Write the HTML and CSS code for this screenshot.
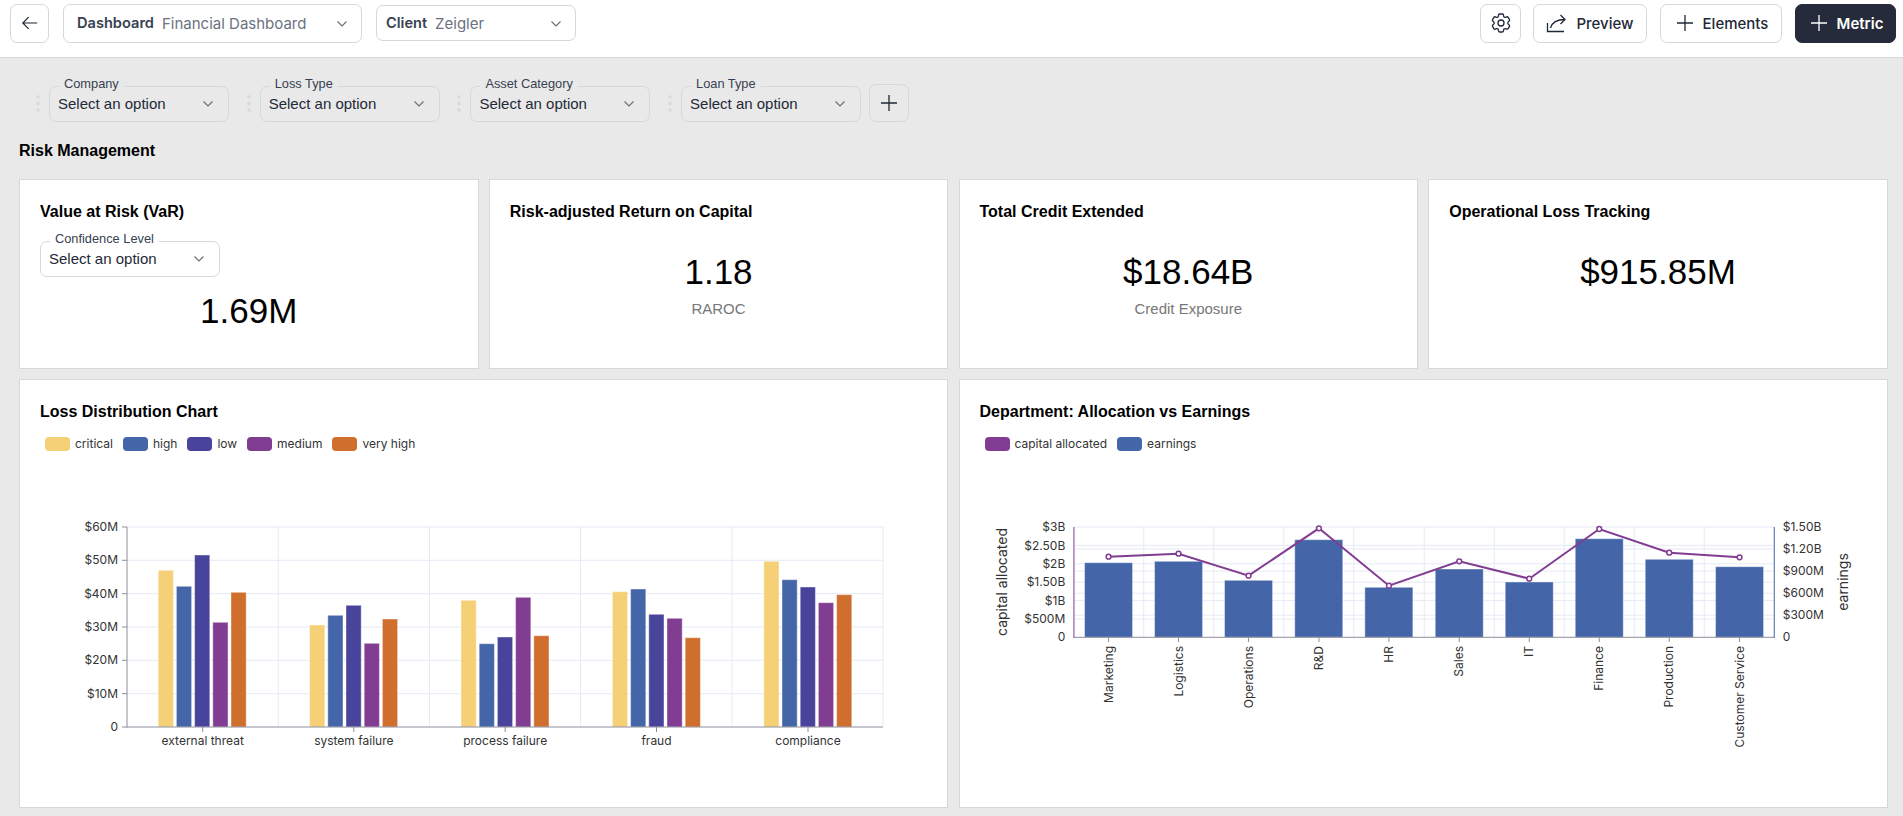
FILE: index.html
```html
<!DOCTYPE html>
<html lang="en">
<head>
<meta charset="utf-8">
<title>Financial Dashboard</title>
<link rel="stylesheet" href="styles.css">
</head>
<body>
<header class="topbar">
  <button class="btn back" aria-label="Back"><svg class="ic18" viewBox="0 0 20 20"><path d="M18 10H2M8.5 3.5 2 10l6.5 6.5"/></svg></button>
  <div class="btn pick pick-dash"><b>Dashboard</b><span>Financial Dashboard</span><svg class="chev" viewBox="0 0 10 6"><path d="M.5.5 5 5 9.5.5"/></svg></div>
  <div class="btn pick pick-client"><b>Client</b><span>Zeigler</span><svg class="chev" viewBox="0 0 10 6"><path d="M.5.5 5 5 9.5.5"/></svg></div>
  <div class="actions">
    <button class="btn gear" aria-label="Settings"><svg class="ic24" viewBox="0 0 24 24"><path d="M9.594 3.94c.09-.542.56-.94 1.11-.94h2.593c.55 0 1.02.398 1.11.94l.213 1.281c.063.374.313.686.645.87.074.04.147.083.22.127.325.196.72.257 1.075.124l1.217-.456a1.125 1.125 0 0 1 1.37.49l1.296 2.247a1.125 1.125 0 0 1-.26 1.431l-1.003.827c-.293.241-.438.613-.43.992a7.723 7.723 0 0 1 0 .255c-.008.378.137.75.43.991l1.004.827c.424.35.534.955.26 1.43l-1.298 2.247a1.125 1.125 0 0 1-1.369.491l-1.217-.456c-.355-.133-.75-.072-1.076.124a6.47 6.47 0 0 1-.22.128c-.331.183-.581.495-.644.869l-.213 1.281c-.09.543-.56.94-1.11.94h-2.594c-.55 0-1.019-.398-1.11-.94l-.213-1.281c-.062-.374-.312-.686-.644-.87a6.52 6.52 0 0 1-.22-.127c-.325-.196-.72-.257-1.076-.124l-1.217.456a1.125 1.125 0 0 1-1.369-.49l-1.297-2.247a1.125 1.125 0 0 1 .26-1.431l1.004-.827c.292-.24.437-.613.43-.991a6.932 6.932 0 0 1 0-.255c.007-.38-.138-.751-.43-.992l-1.004-.827a1.125 1.125 0 0 1-.26-1.43l1.297-2.247a1.125 1.125 0 0 1 1.37-.491l1.216.456c.356.133.751.072 1.076-.124.072-.044.146-.086.22-.128.332-.183.582-.495.644-.869l.214-1.28Z"/><path d="M15 12a3 3 0 1 1-6 0 3 3 0 0 1 6 0Z"/></svg></button>
    <button class="btn act act-preview"><svg class="ic20" viewBox="0 0 20 20"><path d="M1.500 10v8.500H18"/><path d="M4.500 15C6 9.500 10 6.500 19 6.500M14.500 2 19 6.500 14.500 11"/></svg>Preview</button>
    <button class="btn act act-elements"><svg class="ic16" viewBox="0 0 16 16"><path d="M8 0v16M0 8h16"/></svg>Elements</button>
    <button class="btn act act-metric"><svg class="ic16" viewBox="0 0 16 16"><path d="M8 0v16M0 8h16"/></svg>Metric</button>
  </div>
</header>

<section class="filters">
  <div class="filter"><svg class="handle" viewBox="0 0 6 18"><circle cx="3" cy="2" r="1.800"/><circle cx="3" cy="8.500" r="1.800"/><circle cx="3" cy="15" r="1.800"/></svg>
    <div class="select"><label>Company</label><span>Select an option</span><svg class="chev" viewBox="0 0 10 6"><path d="M.5.5 5 5 9.5.5"/></svg></div></div>
  <div class="filter"><svg class="handle" viewBox="0 0 6 18"><circle cx="3" cy="2" r="1.800"/><circle cx="3" cy="8.500" r="1.800"/><circle cx="3" cy="15" r="1.800"/></svg>
    <div class="select"><label>Loss Type</label><span>Select an option</span><svg class="chev" viewBox="0 0 10 6"><path d="M.5.5 5 5 9.5.5"/></svg></div></div>
  <div class="filter"><svg class="handle" viewBox="0 0 6 18"><circle cx="3" cy="2" r="1.800"/><circle cx="3" cy="8.500" r="1.800"/><circle cx="3" cy="15" r="1.800"/></svg>
    <div class="select"><label>Asset Category</label><span>Select an option</span><svg class="chev" viewBox="0 0 10 6"><path d="M.5.5 5 5 9.5.5"/></svg></div></div>
  <div class="filter"><svg class="handle" viewBox="0 0 6 18"><circle cx="3" cy="2" r="1.800"/><circle cx="3" cy="8.500" r="1.800"/><circle cx="3" cy="15" r="1.800"/></svg>
    <div class="select"><label>Loan Type</label><span>Select an option</span><svg class="chev" viewBox="0 0 10 6"><path d="M.5.5 5 5 9.5.5"/></svg></div></div>
  <button class="add" aria-label="Add filter"><svg class="ic16" viewBox="0 0 16 16"><path d="M8 0v16M0 8h16"/></svg></button>
</section>

<h2 class="section-title">Risk Management</h2>

<main class="grid">
  <article class="card stat">
    <h3>Value at Risk (VaR)</h3>
    <div class="select card-select"><label>Confidence Level</label><span>Select an option</span><svg class="chev" viewBox="0 0 10 6"><path d="M.5.5 5 5 9.5.5"/></svg></div>
    <div class="value value-tight">1.69M</div>
  </article>
  <article class="card stat">
    <h3>Risk-adjusted Return on Capital</h3>
    <div class="value">1.18</div>
    <div class="sub">RAROC</div>
  </article>
  <article class="card stat">
    <h3>Total Credit Extended</h3>
    <div class="value">$18.64B</div>
    <div class="sub">Credit Exposure</div>
  </article>
  <article class="card stat">
    <h3>Operational Loss Tracking</h3>
    <div class="value">$915.85M</div>
  </article>

  <article class="card chart">
    <h3>Loss Distribution Chart</h3>
    <ul class="legend">
      <li><i class="sw c-yellow"></i>critical</li>
      <li><i class="sw c-blue"></i>high</li>
      <li><i class="sw c-indigo"></i>low</li>
      <li><i class="sw c-purple"></i>medium</li>
      <li><i class="sw c-orange"></i>very high</li>
    </ul>
    <svg class="plot" viewBox="20 507 927 300">
      <g class="gridlines">
        <path d="M127 527H883M127 560.300H883M127 593.700H883M127 627H883M127 660.300H883M127 693.700H883"/>
        <path d="M278.300 527V727M429.500 527V727M580.600 527V727M732 527V727M883 527V727"/>
      </g>
      <g class="bars">
        <rect class="f-yellow" x="158.200" y="570.300" width="15.200" height="156.700"/>
        <rect class="f-blue" x="176.400" y="586.300" width="15.200" height="140.700"/>
        <rect class="f-indigo" x="194.600" y="555" width="15.200" height="172"/>
        <rect class="f-purple" x="212.800" y="622.300" width="15.200" height="104.700"/>
        <rect class="f-orange" x="231" y="592.300" width="15.200" height="134.700"/>

        <rect class="f-yellow" x="309.600" y="625" width="15.200" height="102"/>
        <rect class="f-blue" x="327.800" y="615.300" width="15.200" height="111.700"/>
        <rect class="f-indigo" x="346" y="605.300" width="15.200" height="121.700"/>
        <rect class="f-purple" x="364.200" y="643.300" width="15.200" height="83.700"/>
        <rect class="f-orange" x="382.400" y="619" width="15.200" height="108"/>

        <rect class="f-yellow" x="461" y="600.300" width="15.200" height="126.700"/>
        <rect class="f-blue" x="479.200" y="643.700" width="15.200" height="83.300"/>
        <rect class="f-indigo" x="497.400" y="637" width="15.200" height="90"/>
        <rect class="f-purple" x="515.600" y="597.300" width="15.200" height="129.700"/>
        <rect class="f-orange" x="533.800" y="635.700" width="15.200" height="91.300"/>

        <rect class="f-yellow" x="612.400" y="591.700" width="15.200" height="135.300"/>
        <rect class="f-blue" x="630.600" y="589" width="15.200" height="138"/>
        <rect class="f-indigo" x="648.800" y="614.300" width="15.200" height="112.700"/>
        <rect class="f-purple" x="667" y="618.300" width="15.200" height="108.700"/>
        <rect class="f-orange" x="685.200" y="637.700" width="15.200" height="89.300"/>

        <rect class="f-yellow" x="763.800" y="561.300" width="15.200" height="165.700"/>
        <rect class="f-blue" x="782" y="579.700" width="15.200" height="147.300"/>
        <rect class="f-indigo" x="800.200" y="587" width="15.200" height="140"/>
        <rect class="f-purple" x="818.400" y="602.700" width="15.200" height="124.300"/>
        <rect class="f-orange" x="836.600" y="594.700" width="15.200" height="132.300"/>
      </g>
      <path class="axis" d="M127 527V727.500M122 527H127M122 560.300H127M122 593.700H127M122 627H127M122 660.300H127M122 693.700H127M122 727H883M202.700 727V732M353.800 727V732M505.200 727V732M656.500 727V732M808 727V732"/>
      <g class="tick end">
        <text x="118" y="531">$60M</text>
        <text x="118" y="564">$50M</text>
        <text x="118" y="597.500">$40M</text>
        <text x="118" y="631">$30M</text>
        <text x="118" y="664">$20M</text>
        <text x="118" y="697.500">$10M</text>
        <text x="118" y="731">0</text>
      </g>
      <g class="tick mid">
        <text x="202.700" y="745">external threat</text>
        <text x="353.800" y="745">system failure</text>
        <text x="505.200" y="745">process failure</text>
        <text x="656.500" y="745">fraud</text>
        <text x="808" y="745">compliance</text>
      </g>
    </svg>
  </article>

  <article class="card chart">
    <h3>Department: Allocation vs Earnings</h3>
    <ul class="legend">
      <li><i class="sw c-purple"></i>capital allocated</li>
      <li><i class="sw c-blue"></i>earnings</li>
    </ul>
    <svg class="plot" viewBox="959.750 507 927 300">
      <g class="gridlines">
        <path d="M1074 527H1774M1074 545.400H1774M1074 563.800H1774M1074 582.200H1774M1074 600.600H1774M1074 619H1774"/>
        <path d="M1074 549H1774M1074 571.100H1774M1074 593.200H1774M1074 615.200H1774"/>
        <path d="M1143.500 527V637M1213.500 527V637M1283.500 527V637M1353.500 527V637M1424 527V637M1494 527V637M1564 527V637M1634 527V637M1704 527V637"/>
      </g>
      <g class="bars">
        <rect class="f-blue" x="1084.300" y="562.700" width="48" height="74.600"/>
        <rect class="f-blue" x="1154.300" y="561.300" width="48" height="76"/>
        <rect class="f-blue" x="1224.300" y="580.300" width="48" height="57"/>
        <rect class="f-blue" x="1294.500" y="539.700" width="48" height="97.600"/>
        <rect class="f-blue" x="1364.600" y="587.300" width="48" height="50"/>
        <rect class="f-blue" x="1435" y="569" width="48" height="68.300"/>
        <rect class="f-blue" x="1505" y="582" width="48" height="55.300"/>
        <rect class="f-blue" x="1575" y="538.700" width="48" height="98.600"/>
        <rect class="f-blue" x="1645" y="559.300" width="48" height="78"/>
        <rect class="f-blue" x="1715.300" y="566.700" width="48" height="70.600"/>
      </g>
      <path class="axis" d="M1074 637.300H1774M1108.300 637V642M1178.300 637V642M1248.300 637V642M1318.700 637V642M1388.700 637V642M1459 637V642M1529 637V642M1599 637V642M1669 637V642M1739.300 637V642"/>
      <path class="axis-left" d="M1073.700 527V638"/>
      <path class="axis-right" d="M1774 527V638"/>
      <polyline class="line" points="1108.300,556.700 1178.300,553.700 1248.300,575.700 1318.700,528.300 1388.700,585.700 1459,561.300 1529,578.700 1599,529 1669,552.700 1739.300,557.300"/>
      <g class="dots">
        <circle cx="1108.300" cy="556.700" r="2.400"/><circle cx="1178.300" cy="553.700" r="2.400"/><circle cx="1248.300" cy="575.700" r="2.400"/><circle cx="1318.700" cy="528.300" r="2.400"/><circle cx="1388.700" cy="585.700" r="2.400"/><circle cx="1459" cy="561.300" r="2.400"/><circle cx="1529" cy="578.700" r="2.400"/><circle cx="1599" cy="529" r="2.400"/><circle cx="1669" cy="552.700" r="2.400"/><circle cx="1739.300" cy="557.300" r="2.400"/>
      </g>
      <g class="tick end">
        <text x="1065" y="531">$3B</text>
        <text x="1065" y="549.500">$2.50B</text>
        <text x="1065" y="568">$2B</text>
        <text x="1065" y="586">$1.50B</text>
        <text x="1065" y="604.500">$1B</text>
        <text x="1065" y="623">$500M</text>
        <text x="1065" y="641">0</text>
      </g>
      <g class="tick">
        <text x="1782.500" y="531">$1.50B</text>
        <text x="1782.500" y="553">$1.20B</text>
        <text x="1782.500" y="575">$900M</text>
        <text x="1782.500" y="597">$600M</text>
        <text x="1782.500" y="619">$300M</text>
        <text x="1782.500" y="641">0</text>
      </g>
      <g class="tick end">
        <text x="0" y="0" transform="translate(1112.500 646) rotate(-90)">Marketing</text>
        <text x="0" y="0" transform="translate(1182.500 646) rotate(-90)">Logistics</text>
        <text x="0" y="0" transform="translate(1252.500 646) rotate(-90)">Operations</text>
        <text x="0" y="0" transform="translate(1322.900 646) rotate(-90)">R&amp;D</text>
        <text x="0" y="0" transform="translate(1392.900 646) rotate(-90)">HR</text>
        <text x="0" y="0" transform="translate(1463.200 646) rotate(-90)">Sales</text>
        <text x="0" y="0" transform="translate(1533.200 646) rotate(-90)">IT</text>
        <text x="0" y="0" transform="translate(1603.200 646) rotate(-90)">Finance</text>
        <text x="0" y="0" transform="translate(1673.200 646) rotate(-90)">Production</text>
        <text x="0" y="0" transform="translate(1743.500 646) rotate(-90)">Customer Service</text>
      </g>
      <g class="axis-name">
        <text x="0" y="0" transform="translate(1007 582) rotate(-90)">capital allocated</text>
        <text x="0" y="0" transform="translate(1848 582) rotate(-90)">earnings</text>
      </g>
    </svg>
  </article>
</main>
</body>
</html>
```
FILE: styles.css
```css
* { box-sizing: border-box; }
html, body { margin: 0; height: 816px; overflow: hidden; }
body { background: #e9e9e9; font-family: "Liberation Sans", Arial, sans-serif; color: #000; }
svg { display: block; }
ul { margin: 0; padding: 0; list-style: none; }
h2, h3 { margin: 0; font-size: 16px; line-height: 18px; font-weight: 700; }

.topbar { display: flex; align-items: center; gap: 14px; height: 58px; padding: 4px 7px 15px 10px; background: #fff; border-bottom: 1px solid #d6d7de; }
.btn { display: flex; align-items: center; height: 39px; background: #fff; border: 1px solid #d5d6de; border-radius: 7px; font: 500 15px/1 Inter, sans-serif; color: #1f2937; padding: 0; }
.ic18 { width: 18px; height: 18px; fill: none; stroke: #1f2937; stroke-width: 1.3; }
.ic20 { width: 20px; height: 20px; fill: none; stroke: #1f2937; stroke-width: 1.3; }
.ic24 { width: 24px; height: 24px; fill: none; stroke: #1f2937; stroke-width: 1.3; }
.ic16 { width: 16px; height: 16px; fill: none; stroke: #1f2937; stroke-width: 1.3; }
.chev { width: 10px; height: 6px; fill: none; stroke: #6b6f78; stroke-width: 1.2; flex: none; }
.back { width: 39px; justify-content: center; }
.pick { position: relative; padding-left: 13px; gap: 8px; font-size: 14.600px; }
.pick b { font-weight: 600; color: #374151; }
.pick span { color: #6b7280; font-weight: 400; font-size: 15px; }
.pick .chev { position: absolute; right: 14px; top: 16px; }
.pick-dash { width: 299px; }
.pick-client { width: 200px; height: 36px; padding-left: 9px; }
.pick-client .chev { top: 15px; }
.actions { display: flex; margin-left: auto; gap: 13px; }
.gear { width: 41px; justify-content: center; margin-right: -1px; }
.act { justify-content: center; gap: 10px; }
.act-preview { width: 114px; }
.act-elements { width: 122px; padding-left: 3px; }
.act-metric { width: 101px; padding-left: 3px; background: #252b3a; border-color: #252b3a; color: #fff; font-weight: 600; }
.act-metric .ic16 { stroke: #fff; }

.filters { display: flex; align-items: flex-end; gap: 16.700px; padding: 26px 0 0 35px; }
.filter { display: flex; align-items: center; gap: 8px; }
.handle { width: 6px; height: 18px; fill: #d8d8dd; }
.select { position: relative; display: flex; align-items: center; justify-content: space-between; width: 180px; height: 36px; padding: 0 15px 2px 8px; border: 1px solid #d6d7de; border-radius: 7px; font-size: 15px; color: #1f2937; }
.select .chev { margin-top: 2px; }
.select label { position: absolute; left: 9px; top: -10px; padding: 0 5px; font-size: 12.800px; line-height: 14px; background: #e9e9e9; color: #374151; }
.add { display: flex; align-items: center; justify-content: center; width: 40px; height: 38px; margin-left: -9px; background: transparent; border: 1px solid #d6d7de; border-radius: 7px; padding: 0; }

.section-title { margin: 20px 0 19px 19px; }

.grid { display: grid; grid-template-columns: repeat(4, 459.500px); grid-template-rows: 190px 429px; column-gap: 10.250px; row-gap: 10px; margin-left: 19px; }
.card { background: #fff; border: 1px solid #d6d7de; }
.stat { display: flex; flex-direction: column; padding: 23px 20px 0; }
.card-select { margin-top: 20px; background: #fff; }
.card-select label { background: #fff; }
.value { margin-top: 31px; font-size: 35px; line-height: 40px; text-align: center; }
.value-tight { margin-top: 14px; }
.sub { margin-top: 7px; font-size: 15px; line-height: 20px; text-align: center; color: #777; }

.chart { grid-column: span 2; display: flex; flex-direction: column; padding-top: 23px; }
.chart h3 { margin-left: 20px; }
.legend { display: flex; gap: 10px; margin: 16px 0 0 25px; font: 400 12px/14px Inter, sans-serif; color: #333; }
.legend li { display: flex; align-items: center; gap: 5px; }
.sw { width: 25px; height: 14px; border-radius: 4px; }
.c-yellow { background: #f6d077; }
.c-blue { background: #4466a8; }
.c-indigo { background: #49449b; }
.c-purple { background: #813d92; }
.c-orange { background: #cf6e2d; }

.plot { width: 927px; height: 300px; margin-top: auto; }
.gridlines path { fill: none; stroke: #e6eaf5; stroke-width: 1; }
.bars rect { stroke: #fff; stroke-opacity: .4; stroke-width: 1; }
.f-yellow { fill: #f6d077; }
.f-blue { fill: #4466a8; }
.f-indigo { fill: #49449b; }
.f-purple { fill: #813d92; }
.f-orange { fill: #cf6e2d; }
.axis { fill: none; stroke: #8e8e9b; stroke-width: 1; }
.axis-left { fill: none; stroke: #813d92; stroke-width: 1; }
.axis-right { fill: none; stroke: #4466a8; stroke-width: 1; }
.line { fill: none; stroke: #813d92; stroke-width: 2; }
.dots circle { fill: #fff; stroke: #813d92; stroke-width: 1.500; }
.tick text { font: 400 12px Inter, sans-serif; fill: #333; }
.end text { text-anchor: end; }
.mid text { text-anchor: middle; }
.axis-name text { font: 400 14px Inter, sans-serif; fill: #333; text-anchor: middle; }
```
